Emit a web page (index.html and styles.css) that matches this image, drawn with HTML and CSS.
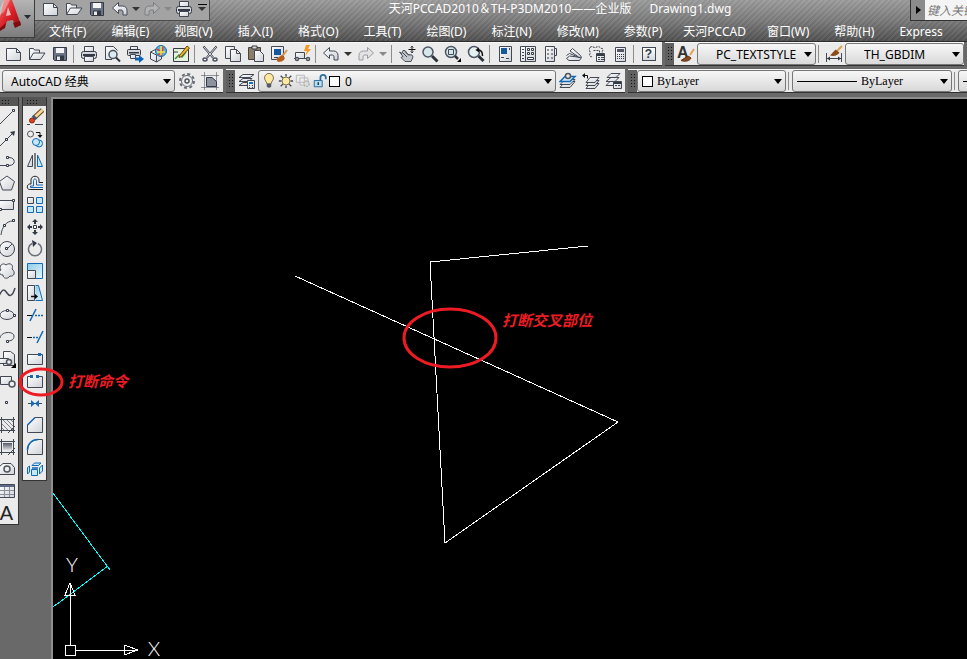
FILE: index.html
```
<!DOCTYPE html>
<html lang="zh-CN">
<head>
  <meta charset="UTF-8" />
  <meta name="viewport" content="width=device-width, initial-scale=1" />
  <title>天河PCCAD2010 - Drawing1.dwg</title>
  <link rel="stylesheet" href="styles.css">
</head>
<body>

  <!-- icon sprite -->
  <svg class="sprite" aria-hidden="true">
    <defs>
      <linearGradient id="paper" x1="0" y1="0" x2="1" y2="1"><stop offset="0" stop-color="#fff"/><stop offset="1" stop-color="#cfd2d8"/></linearGradient>
      <linearGradient id="sky" x1="0" y1="0" x2="1" y2="1"><stop offset="0" stop-color="#8ccbe8"/><stop offset="1" stop-color="#e6f6fc"/></linearGradient>
      <linearGradient id="dusk" x1="0" y1="0" x2="0" y2="1"><stop offset="0" stop-color="#555a66"/><stop offset="1" stop-color="#f2f2f2"/></linearGradient>
      <linearGradient id="red" x1="0" y1="0" x2="1" y2="1"><stop offset="0" stop-color="#f47070"/><stop offset=".5" stop-color="#d81f26"/><stop offset="1" stop-color="#8d0d10"/></linearGradient>
    </defs>
    <symbol id="i-new" viewBox="0 0 18 18"><path class="ol" d="M1.500 3.500h10l4 4v8h-14z"/><path class="ln" d="M11.500 3.500v4h4"/></symbol>
    <symbol id="i-open" viewBox="0 0 18 18"><path class="ol" d="M1.500 14.500v-11h4l1 1.500h5v3"/><path class="ol" d="M1.500 14.500l4-6.500h11.500l-4.500 6.500z"/></symbol>
    <symbol id="i-save" viewBox="0 0 18 18"><path fill="#6b7585" stroke="#333a46" d="M2.500 2.500h13v13h-12l-1-1z"/><path fill="#f4f4f4" d="M5 3h8v5H5z"/><path fill="#333a46" d="M5 10.500h8V15H5z"/><path fill="#e8e8e8" d="M6 11.500h3V15H6z"/></symbol>
    <symbol id="i-print" viewBox="0 0 18 18"><path class="ol" d="M4.500 7V1.500h9V7"/><rect x="1.500" y="6.500" width="15" height="7" rx="2" fill="#d4d6da" stroke="#333a46"/><path fill="#333a46" d="M3 9h12v2H3z"/><path class="ol" d="M4.500 11.500h9v5h-9z"/></symbol>
    <symbol id="i-preview" viewBox="0 0 18 18"><path class="ol" d="M9 14.500H2.500v-13h8l4 4"/><circle cx="10" cy="9.500" r="4" fill="#dcebf2" stroke="#4a505c" stroke-width="1.500"/><path d="M13 12.500l4 4" stroke="#2f333c" stroke-width="2"/></symbol>
    <symbol id="i-publish" viewBox="0 0 18 18"><path class="ol" d="M4.500 5V1.500h7V5"/><rect x="1.500" y="4.500" width="13" height="6" rx="1" fill="#d4d6da" stroke="#333a46"/><path fill="#333a46" d="M3 7h10v1.500H3z"/><path class="ol" d="M4.500 9.500h5v4h-5z"/><path fill="#0b63b8" d="M9 12.500h4V10l5 4-5 4v-2.500H9z"/></symbol>
    <symbol id="i-globe" viewBox="0 0 18 18"><path class="ol" d="M1.500 7l6-3 5 2v8l-5 3-6-3z"/><path class="ln" d="M1.500 7l6 3v7"/><circle cx="12" cy="6" r="5.500" fill="#4db7e8" stroke="#1c6aa3"/><path d="M7.500 4c4 1 6 5 5 7M9 9.500c3 0 5-3 5-8" fill="none" stroke="#e8402c" stroke-width="1.500"/><path d="M8 7h8M12 1v9" stroke="#f5e24a" stroke-width="1.500"/></symbol>
    <symbol id="i-sketch" viewBox="0 0 18 18"><path d="M1.500 3.500h15v13h-15z" fill="#e7f2dc" stroke="#333a46"/><path d="M3 14l4-4 3 2 4-5" fill="none" stroke="#3c8d4c" stroke-width="1.500"/><path d="M2 7h4" stroke="#333a46"/><path d="M7.500 10.500L15 1l2.500 2-8 8.500-2.500 1z" fill="#f0b429" stroke="#6b4a10"/></symbol>
    <symbol id="i-cut" viewBox="0 0 18 18"><path d="M2.500 1.500l9.500 11M15.500 1.500L6 12.500" stroke="#333a46" stroke-width="2"/><path d="M3 2l9 10.500M15 2L6 12.500" stroke="#d9dbdf"/><ellipse cx="4" cy="14.500" rx="2" ry="1.500" class="th"/><ellipse cx="14" cy="14.500" rx="2" ry="1.500" class="th"/></symbol>
    <symbol id="i-copy" viewBox="0 0 18 18"><path class="ol" d="M1.500 1.500h9v12h-9z"/><path class="ol" d="M6.500 4.500h6l4 4v8h-10z"/><path class="ln" d="M12.500 4.500v4h4"/></symbol>
    <symbol id="i-paste" viewBox="0 0 18 18"><path d="M1.500 2.500h12v12h-12z" fill="#8b7f6c" stroke="#4c4438"/><path d="M5 1h5v3H5z" fill="#d8d8d8" stroke="#333a46"/><path class="ol" d="M7.500 5.500h5l4 4v7h-9z"/></symbol>
    <symbol id="i-match" viewBox="0 0 18 18"><path class="ol" d="M1.500 1.500h12v13h-12z"/><path fill="#14579e" d="M4 4h7v6H4z"/><path class="ln" d="M4 12.500h4"/><path d="M17 5l-4.500 6" stroke="#d89a4a" stroke-width="2"/><path fill="#b55f1d" d="M6 14l6-4 3 3c-1 3-4 4-7 4z"/></symbol>
    <symbol id="i-block" viewBox="0 0 18 18"><path class="ol" d="M2.500 7.500h9v6h-9z"/><path class="ln" d="M1 13.500h3M9 13.500h7"/><path fill="#f49a22" d="M13 0l-2 6h3l-2 5 6-7h-3l2-4z"/><circle cx="4" cy="14" r="1.500" class="th"/><circle cx="15" cy="14" r="1.500" class="th"/></symbol>
    <symbol id="i-undo" viewBox="0 0 18 18"><path class="ol" d="M1.500 8L7.500 2.500v3.500h4c3 0 4.500 2 4.500 4.500v4.500h-4v-3c0-1.500-1-2-2-2H7.500v3.500z"/></symbol>
    <symbol id="i-redo" viewBox="0 0 18 18"><path fill="#e3e3e3" stroke="#9a9ca1" d="M16.500 8l-6-5.500v3.500h-4C3.500 6 2 8 2 10.500v4.500h4v-3c0-1.500 1-2 2-2h2.500v3.500z"/></symbol>
    <symbol id="i-redo-qat" viewBox="0 0 18 18"><path fill="#b2b2b2" stroke="#7c7e84" d="M16.500 8l-6-5.500v3.500h-4C3.500 6 2 8 2 10.500v4.500h4v-3c0-1.500 1-2 2-2h2.500v3.500z"/></symbol>
    <symbol id="i-pan" viewBox="0 0 18 18"><path fill="#c4c7cc" stroke="#4a505c" d="M1.500 7l2.500 1.500 1-3 2 0 3 4 4 .5 1 2-2 4.500H7l-4-4 2-1z"/><path class="ln" d="M5 8l4 4M7 6.500l4 4"/><path class="dk" d="M14 1v7M10.500 4.500h7"/><path class="ln" d="M12.500 2.500L14 1l1.500 1.500M12.500 6.500L14 8l1.500-1.500"/></symbol>
    <symbol id="i-zoom" viewBox="0 0 18 18"><circle cx="7" cy="7" r="5" fill="#d5e7e9" stroke="#4f5663" stroke-width="1.500"/><path d="M11 11l5.500 5.500" stroke="#2f333c" stroke-width="3"/></symbol>
    <symbol id="i-zoomwin" viewBox="0 0 18 18"><circle cx="7" cy="7" r="5.500" fill="#d5e7e9" stroke="#4f5663" stroke-width="1.500"/><path class="ln" d="M4.500 4.500h5v5h-5z"/><path d="M11 11l3 3" stroke="#2f333c" stroke-width="2.500"/><path fill="#000" d="M17 13v4h-4z"/></symbol>
    <symbol id="i-zoomprev" viewBox="0 0 18 18"><circle cx="7" cy="7" r="5.500" fill="#e4f0f1" stroke="#4f5663" stroke-width="1.500"/><path d="M11.500 11l5 5" stroke="#2f333c" stroke-width="3"/><path d="M15.500 11c0-4-1-6-4-6" fill="none" stroke="#111" stroke-width="1.500"/><path fill="#111" d="M8.500 5L12 2.500v5z"/></symbol>
    <symbol id="i-props" viewBox="0 0 18 18"><path class="ol" d="M3.500 1.500h12v15h-12z"/><path fill="#14579e" d="M5 3h6v6H5z"/><path class="ln" d="M5 12.500h3M10 13.500h3M13.500 3v2"/></symbol>
    <symbol id="i-center" viewBox="0 0 18 18"><path class="ol" d="M1.500 1.500h15v15h-15z"/><path class="ln" d="M6.500 2v14M3 4.500h2M3 7.500h2M3 10.500h2M3 13.500h2"/><path class="sm" d="M8.500 3.500h2v2h-2zM12.500 3.500h2v2h-2zM8.500 7.500h2v2h-2zM12.500 7.500h2v2h-2zM8.500 12.500h6v2h-6z"/></symbol>
    <symbol id="i-palette" viewBox="0 0 18 18"><path class="ol" d="M3.500 1.500h9v15h-9z"/><path class="ol" d="M12.500 3.500h2v7h-2z"/><path fill="#8a8f99" d="M5 4h2v2H5zM9 4h2v2H9zM5 8h2v2H5zM9 8h2v2H9zM5 12h2v2H5zM9 12h2v2H9z"/></symbol>
    <symbol id="i-sheets" viewBox="0 0 18 18"><path class="ol" d="M1.500 13.500l3-2.500 12 1.500-2 3H4zM1.500 10.500l3-2 10 4"/><path class="ol" d="M5 6l2.500-2.500 8 7c1.500 1.500 0 2.500-2 1.500z"/></symbol>
    <symbol id="i-markup" viewBox="0 0 18 18"><path d="M2 2.500c2-2 3 0 5 0s3-2 5 0 3 0 3 2-2 2 0 4M2 2.500c-2 3 1 4 0 6s0 4 3 3" fill="none" stroke="#333a46" stroke-dasharray="2 1"/><path class="ln" d="M5.500 5.500h6v3" stroke-dasharray="2 1"/><path class="ol" d="M8.500 8.500h8v8h-8z"/><path fill="#333a46" d="M9 9h7v2H9z"/><path class="ln" d="M10 12.500h2M13 12.500h3M10 14.500h2M13 14.500h3"/></symbol>
    <symbol id="i-calc" viewBox="0 0 18 18"><path class="ol" d="M4.500 2.500h10v14h-10z"/><path fill="#556" d="M6 4h7v3H6z"/><path d="M6 9.500h7M6 11.500h7M6 13.500h7" stroke="#333a46" stroke-dasharray="1 1"/></symbol>
    <symbol id="i-brush" viewBox="0 0 18 18"><path d="M17 4L13 10" stroke="#e0a24d" stroke-width="2"/><path fill="#8d4a1c" stroke="#5c3012" d="M4 15.500l7-4.500 3 2c-1 3-6 4-10 2.500z"/></symbol>
    <symbol id="i-dim" viewBox="0 0 18 18"><path class="ln" d="M1.500 8v9M16.500 8v9M2 13.500h14"/><path fill="#333a46" d="M2 13.500l3-2v4zM16 13.500l-3-2v4z"/><path d="M17 1l-5 5" stroke="#e0a24d" stroke-width="2"/><path fill="#8d4a1c" d="M5 10.500l5.500-6 4 3c-2 3-5 4-9.500 3z"/></symbol>
    <symbol id="i-gear" viewBox="0 0 18 18"><circle cx="9" cy="9" r="7" fill="none" stroke="#666b74" stroke-width="2" stroke-dasharray="3 2.500"/><circle cx="9" cy="9" r="5.500" fill="#eee" stroke="#666b74"/><circle cx="9" cy="9" r="2" class="th"/></symbol>
    <symbol id="i-space" viewBox="0 0 18 18"><path d="M.5 3.500h17M.5 15.500h17M3.500.5v17M15.500.5v17" stroke="#333a46" stroke-dasharray="1 1"/><path fill="#8d939e" stroke="#333a46" d="M5.500 14.500v-9H11l4.500 4v5z"/></symbol>
    <symbol id="i-layers" viewBox="0 0 18 18"><path class="ol" d="M5 2.500h11l-4 3H1zM5 6.500h9l-3 3H1zM5 10.500h5l-1 3H1z"/><path class="ol" d="M9.500 8.500h7v8h-7z"/><path fill="#1671c9" d="M11 10h4v2h-4z"/><path class="ln" d="M11 13.500h1M14 13.500h1M11 15.500h1M14 15.500h1"/></symbol>
    <symbol id="i-bulb" viewBox="0 0 18 18"><path fill="#ffe9a0" stroke="#6b6040" d="M6.500 12c0-3-2.500-3-2.500-6.500a5 5 0 0 1 10 0C14 9 11.500 9 11.500 12z"/><path fill="#555b66" d="M6.500 12.500h5v3l-2.500 1.500-2.500-1.500z"/></symbol>
    <symbol id="i-sun" viewBox="0 0 18 18"><path d="M9 1v3M9 14v3M1 9h3M14 9h3M3 3l2.500 2.500M12.500 12.500L15 15M15 3l-2.500 2.500M5.500 12.500L3 15" stroke="#414854" stroke-width="1.500"/><circle cx="9" cy="9" r="4.500" fill="#ffe9a0" stroke="#6b6040"/></symbol>
    <symbol id="i-vp" viewBox="0 0 18 18"><path fill="#eee" stroke="#b2b4b8" d="M1.500 2.500h9v8h-9zM5.500 5.500h9v8h-9z"/><circle cx="13" cy="12" r="3" fill="#ddd" stroke="#aaa" stroke-width="1.500" stroke-dasharray="2 1"/></symbol>
    <symbol id="i-lock" viewBox="0 0 18 18"><path d="M9.500 8V5c0-4 6-4 6 0v2" fill="none" stroke="#2a6f9e" stroke-width="2"/><path fill="#b7e0f3" stroke="#1c5f90" d="M2.500 8.500h9v7h-9z"/><path d="M7 10.500v3" stroke="#123" stroke-width="1.500"/></symbol>
    <symbol id="i-lay1" viewBox="0 0 18 18"><path class="ol" d="M6 9.500h10l-5 6H1z"/><path class="ol" d="M6 7.500h10l-5 5H1z"/><path fill="#cfe8f7" stroke="#1269b8" stroke-width="1.500" d="M6 4.500h10l-5 5H1z"/><circle cx="9" cy="4" r="2.500" class="th"/></symbol>
    <symbol id="i-lay2" viewBox="0 0 18 18"><path class="ol" d="M8 11.500h9l-4 5H4z"/><path class="ol" d="M8 8.500h9l-4 5H4z"/><path class="ol" d="M8 5.500h9l-4 5H4z"/><path class="dk" d="M2 3.500h3.500v3"/><path fill="#111" d="M0 3.500L3 1v5z"/></symbol>
    <symbol id="i-lay3" viewBox="0 0 18 18"><path class="ol" d="M5 9.500h7l-2 4H1z"/><path class="ol" d="M6 5.500h8l-4 4H1z"/><path class="ol" d="M6 1.500h9l-4 4H2z"/><path class="ol" d="M8.500 9.500h8v7h-8z"/><path fill="#333a46" d="M9 10h7v2H9z"/><path class="ln" d="M10 13.500h2M13 13.500h2"/></symbol>

    <symbol id="d-line" viewBox="0 0 18 18"><path class="ln" d="M1 17L14 4"/><path class="sm" d="M14.500 1.500h2v2h-2z"/></symbol>
    <symbol id="d-xline" viewBox="0 0 18 18"><path class="ln" d="M2 16L15 3"/><path fill="#333a46" d="M17 1l-5 1 4 4z"/><path class="sm" d="M7.500 8.500h2v2h-2z"/></symbol>
    <symbol id="d-pline" viewBox="0 0 18 18"><path class="ln" d="M2 13.500h9c7 0 7-8 0-8H10"/><path class="sm" d="M8.500 4.500h2v2h-2zM8.500 12.500h2v2h-2z"/></symbol>
    <symbol id="d-poly" viewBox="0 0 18 18"><path class="ol" d="M9 2l7.500 5.500-3 8.500h-9l-3-8.500z"/></symbol>
    <symbol id="d-rect" viewBox="0 0 18 18"><path class="ol" d="M1.500 4.500h14v9h-14z"/><path class="sm" d="M14.500 3.500h2v2h-2zM1.500 12.500h2v2h-2z"/></symbol>
    <symbol id="d-arc" viewBox="0 0 18 18"><path class="ln" d="M3 17C4 9 8 3 15 3"/><path class="sm" d="M14.500 1.500h2v2h-2zM5.500 6.500h2v2h-2z"/></symbol>
    <symbol id="d-circle" viewBox="0 0 18 18"><circle cx="9" cy="9" r="7.500" class="ol"/><path class="ln" d="M9 9l5-5"/><path class="sm" d="M7.500 7.500h2v2h-2z"/></symbol>
    <symbol id="d-cloud" viewBox="0 0 18 18"><path class="ol" d="M3 8C0 4 5 0 8 3c4-3 8 0 6 4 4 3 2 8-2 7-3 4-7 2-7-1-4 0-5-4-2-5z"/></symbol>
    <symbol id="d-spline" viewBox="0 0 18 18"><path class="ln" d="M1 12c4-9 6-6 8-3s5 5 8-5" stroke-width="1.500"/></symbol>
    <symbol id="d-ellipse" viewBox="0 0 18 18"><ellipse cx="9" cy="9" rx="7" ry="4.500" class="ol"/><path class="sm" d="M8.500 3.500h2v2h-2zM15.500 8.500h2v2h-2z"/></symbol>
    <symbol id="d-earc" viewBox="0 0 18 18"><path class="ln" d="M2 10C3 3 16 3 16 8c0 4-3 5-7 5"/><path class="sm" d="M8.500 12.500h2v2h-2z"/></symbol>
    <symbol id="d-insert" viewBox="0 0 18 18"><path class="ol" d="M5.500 1.500h7l4 3v11h-11z"/><path class="ol" d="M1.500 8.500h9v5h-9z"/><circle cx="11" cy="12" r="2.500" class="th"/><path fill="#000" d="M18 13v5h-5z"/></symbol>
    <symbol id="d-mkblock" viewBox="0 0 18 18"><path class="ol" d="M2.500 4.500h11v8h-11z"/><circle cx="14" cy="12" r="3" class="th"/></symbol>
    <symbol id="d-point" viewBox="0 0 18 18"><path class="sm" d="M7.500 7.500h2v2h-2z"/></symbol>
    <symbol id="d-hatch" viewBox="0 0 18 18"><path d="M5 4l10 10M9 4l6 6M4 8l7 7M13 4l2 2M4 12l2 2" stroke="#7d828c"/><path class="ln" d="M3.500 1v16M15.500 1v16M1 3.500h16M1 14.500h16M10 17l7-7"/></symbol>
    <symbol id="d-grad" viewBox="0 0 18 18"><path class="ln" d="M3.500 1v16M15.500 1v16M1 3.500h16M1 14.500h16M10 17l7-7"/><path fill="url(#dusk)" d="M5 5h9v8H5z"/></symbol>
    <symbol id="d-region" viewBox="0 0 18 18"><path class="ol" d="M1.500 14.500v-8L5 3.500h8l3.500 4v7z"/><circle cx="9" cy="9" r="3" class="th"/></symbol>
    <symbol id="d-table" viewBox="0 0 18 18"><path class="ol" d="M1.500 2.500h15v13h-15z"/><path fill="#5b6b86" d="M2 3h14v2H2z"/><path d="M2 8.500h14M2 12.500h14M6.500 5v10M11.500 5v10" stroke="#8a8f99"/></symbol>

    <symbol id="m-erase" viewBox="0 0 18 18"><path d="M16.500 2L8 10" stroke="#6b4a10" stroke-width="5"/><path d="M16.500 2L8 10" stroke="#f3d79a" stroke-width="3"/><path d="M9.500 8.500l-2 2" stroke="#41567a" stroke-width="5"/><circle cx="6" cy="12.500" r="2.500" fill="#d8421c" stroke="#8a260c"/><path class="ln" d="M1 16.500h3M9 16.500h8"/></symbol>
    <symbol id="m-copy" viewBox="0 0 18 18"><circle cx="4.500" cy="4" r="3" fill="#eee" stroke="#50565f"/><path class="dk" d="M10 2.500h4v3"/><path fill="#111" d="M11.500 5h5L14 8z"/><circle cx="13" cy="13.500" r="3.500" class="bb"/><circle cx="10" cy="12" r="3.500" class="bb"/></symbol>
    <symbol id="m-mirror" viewBox="0 0 18 18"><path class="ol" d="M6.500 3v11.500h-5z"/><path class="bb" d="M11.500 3v11.500h5z"/><path d="M9 1v16" stroke="#111"/></symbol>
    <symbol id="m-offset" viewBox="0 0 18 18"><path d="M17 15.500H3.500c-3 0-3-5 0-5.500H5V6c0-5 8-5 8 0v2.500h4" fill="none" stroke="#222"/><path d="M17 13.500H4.500v-1.500H7.500V6.500c0-2 3-2 3 0v4.500H17" fill="none" stroke="#1269b8"/></symbol>
    <symbol id="m-array" viewBox="0 0 18 18"><path class="ol" d="M1.500 1.500h6v6h-6z"/><path class="bb" d="M10.500 1.500h6v6h-6zM1.500 10.500h6v6h-6zM10.500 10.500h6v6h-6z"/></symbol>
    <symbol id="m-move" viewBox="0 0 18 18"><path d="M9 2v4M9 12v4M2 9h4M12 9h4" stroke="#333a46" stroke-width="2"/><path fill="#333a46" d="M9 1l3 3H6zM9 17l3-3H6zM1 9l3-3v6zM17 9l-3-3v6z"/><path class="sm" d="M7.500 7.500h3v3h-3z"/></symbol>
    <symbol id="m-rotate" viewBox="0 0 18 18"><path d="M12 3.500a6.500 6.500 0 1 1-6 0" fill="none" stroke="#6b7079" stroke-width="1.500"/><path fill="#333a46" d="M6 0l5 3-4 4z"/></symbol>
    <symbol id="m-scale" viewBox="0 0 18 18"><path fill="url(#sky)" stroke="#1269b8" d="M1.500 1.500h15v15h-15z"/><path class="ol" d="M1.500 8.500h8v8h-8z"/></symbol>
    <symbol id="m-stretch" viewBox="0 0 18 18"><path class="ol" d="M1.500 1.500h7v15h-7z"/><path fill="url(#sky)" stroke="#1269b8" d="M9.500 1.500h3l4 15h-7"/><path class="dk" d="M5 12.500h5" stroke-width="1.500"/><path fill="#000" d="M9 10l3 2.500L9 15z"/></symbol>
    <symbol id="m-trim" viewBox="0 0 18 18"><path class="dk" d="M1 9.500h5"/><path class="bs" d="M4 15l6-12"/><path class="bs" d="M9 9.500h8" stroke-dasharray="2 1"/></symbol>
    <symbol id="m-extend" viewBox="0 0 18 18"><path class="dk" d="M1 9.500h5"/><path class="bs" d="M7 9.500h5" stroke-dasharray="2 1"/><path class="bs" d="M11 15l6-12"/></symbol>
    <symbol id="m-break1" viewBox="0 0 18 18"><path class="ol" d="M1.500 4.500h15v10h-15z"/><path fill="#1269b8" d="M12 3h3v3h-3z"/></symbol>
    <symbol id="m-break" viewBox="0 0 18 18"><path fill="url(#paper)" d="M2 4h14v11H2z"/><path class="ln" d="M5 4.500H1.500v11h15v-11H13"/><path fill="#1269b8" d="M4 3h3v3H4zM10 3h3v3h-3z"/></symbol>
    <symbol id="m-join" viewBox="0 0 18 18"><path class="ln" d="M2 9.500h14"/><path fill="#1269b8" d="M5 6l4 3.500L5 13zM13 6L9 9.500l4 3.500z"/></symbol>
    <symbol id="m-chamfer" viewBox="0 0 18 18"><path class="ol" d="M1.500 9v7.500h15v-15H9z"/><path class="bs" d="M1.500 9L9 1.500"/></symbol>
    <symbol id="m-fillet" viewBox="0 0 18 18"><path class="ol" d="M1.500 12v4.500h15v-15H12C6 1.500 1.500 6 1.500 12z"/><path class="bs" d="M1.500 12C1.500 6 6 1.500 12 1.500"/></symbol>
    <symbol id="m-explode" viewBox="0 0 18 18"><path class="bb" d="M5.500 9.500h6v6h-6zM6 5.500L8.500 3H15l-2.500 2.500zM13.500 8l3-3v6l-3 3zM1.500 7.500l2-1.500v6l-2 2z"/><path class="bs" d="M6 8h6"/></symbol>
  </svg>

  <header class="app-header">
    <button class="app-button" aria-label="应用程序菜单">
      <svg width="34" height="37" viewBox="0 0 34 37"><path fill="url(#red)" d="M4 0h8l9 25-6 2-2-7-6 1-2 6-6 4v-9z"/><path fill="#fff" fill-opacity=".35" d="M4 0h6L4 12l-4 3V8z"/><path fill="#e9b8b8" d="M8 7l3 8-5 1z"/><path fill="#7d0c10" d="M21 25l-6 3-2-5 7-2zM0 31l5-3 1-5-6 5z"/><path fill="#222a33" d="M24 15h7l-3.500 4z"/></svg>
    </button>
    <div class="header-main">
      <div class="title-row">
        <div class="quick-access">
          <button class="tool" aria-label="新建"><svg><use href="#i-new"/></svg></button>
          <button class="tool" aria-label="打开"><svg><use href="#i-open"/></svg></button>
          <button class="tool" aria-label="保存"><svg><use href="#i-save"/></svg></button>
          <button class="tool" aria-label="放弃"><svg><use href="#i-undo"/></svg></button>
          <button class="caret" aria-label="放弃列表"></button>
          <button class="tool" aria-label="重做"><svg><use href="#i-redo-qat"/></svg></button>
          <button class="caret off" aria-label="重做列表"></button>
          <button class="tool" aria-label="打印"><svg><use href="#i-print"/></svg></button>
          <button class="caret more" aria-label="自定义"></button>
        </div>
        <h1 class="title"><span>天河PCCAD2010＆TH-P3DM2010——企业版</span><span>Drawing1.dwg</span></h1>
        <div class="search">
          <button class="search-arrow" aria-label="展开"></button>
          <input type="text" class="search-box" placeholder="键入关键字或短语" aria-label="搜索">
        </div>
      </div>
      <nav class="menu-bar">
        <button>文件(F)</button>
        <button>编辑(E)</button>
        <button>视图(V)</button>
        <button>插入(I)</button>
        <button>格式(O)</button>
        <button>工具(T)</button>
        <button>绘图(D)</button>
        <button>标注(N)</button>
        <button>修改(M)</button>
        <button>参数(P)</button>
        <button class="tight">天河PCCAD</button>
        <button class="tight">窗口(W)</button>
        <button>帮助(H)</button>
        <button>Express</button>
      </nav>
    </div>
  </header>

  <div class="toolbar-row">
    <div class="toolbar first">
      <button class="tool" aria-label="新建"><svg><use href="#i-new"/></svg></button>
      <button class="tool" aria-label="打开"><svg><use href="#i-open"/></svg></button>
      <button class="tool" aria-label="保存"><svg><use href="#i-save"/></svg></button>
      <span class="sep"></span>
      <button class="tool" aria-label="打印"><svg><use href="#i-print"/></svg></button>
      <button class="tool" aria-label="打印预览"><svg><use href="#i-preview"/></svg></button>
      <button class="tool" aria-label="发布"><svg><use href="#i-publish"/></svg></button>
      <button class="tool" aria-label="三维DWF"><svg><use href="#i-globe"/></svg></button>
      <button class="tool" aria-label="草图"><svg><use href="#i-sketch"/></svg></button>
      <span class="sep"></span>
      <button class="tool" aria-label="剪切"><svg><use href="#i-cut"/></svg></button>
      <button class="tool" aria-label="复制"><svg><use href="#i-copy"/></svg></button>
      <button class="tool" aria-label="粘贴"><svg><use href="#i-paste"/></svg></button>
      <button class="tool" aria-label="特性匹配"><svg><use href="#i-match"/></svg></button>
      <button class="tool" aria-label="块编辑器"><svg><use href="#i-block"/></svg></button>
      <span class="sep"></span>
      <button class="tool" aria-label="放弃"><svg><use href="#i-undo"/></svg></button>
      <button class="caret" aria-label="放弃列表"></button>
      <button class="tool" aria-label="重做"><svg><use href="#i-redo"/></svg></button>
      <button class="caret off" aria-label="重做列表"></button>
      <span class="sep"></span>
      <button class="tool" aria-label="平移"><svg><use href="#i-pan"/></svg></button>
      <button class="tool" aria-label="缩放"><svg><use href="#i-zoom"/></svg></button>
      <button class="tool" aria-label="窗口缩放"><svg><use href="#i-zoomwin"/></svg></button>
      <button class="tool" aria-label="缩放上一个"><svg><use href="#i-zoomprev"/></svg></button>
      <span class="sep"></span>
      <button class="tool" aria-label="特性"><svg><use href="#i-props"/></svg></button>
      <button class="tool" aria-label="设计中心"><svg><use href="#i-center"/></svg></button>
      <button class="tool" aria-label="工具选项板"><svg><use href="#i-palette"/></svg></button>
      <button class="tool" aria-label="图纸集"><svg><use href="#i-sheets"/></svg></button>
      <button class="tool" aria-label="标记集"><svg><use href="#i-markup"/></svg></button>
      <button class="tool" aria-label="快速计算器"><svg><use href="#i-calc"/></svg></button>
      <span class="sep"></span>
      <button class="tool" aria-label="帮助"><span class="help-mark">?</span></button>
    </div>
    <div class="toolbar grip">
      <button class="tool" aria-label="文字样式"><svg><text x="0" y="13" class="glyph-a">A</text><use href="#i-brush"/></svg></button>
      <select class="combo style-combo" aria-label="文字样式"><option>PC_TEXTSTYLE</option></select>
      <span class="sep"></span>
      <button class="tool" aria-label="标注样式"><svg><use href="#i-dim"/></svg></button>
      <select class="combo style-combo" aria-label="标注样式"><option>TH_GBDIM</option></select>
    </div>
  </div>

  <div class="toolbar-row">
    <div class="toolbar first">
      <select class="combo workspace-combo" aria-label="工作空间"><option>AutoCAD 经典</option></select>
      <button class="tool" aria-label="工作空间设置"><svg><use href="#i-gear"/></svg></button>
      <button class="tool" aria-label="我的工作空间"><svg><use href="#i-space"/></svg></button>
    </div>
    <div class="toolbar grip">
      <button class="tool" aria-label="图层特性"><svg><use href="#i-layers"/></svg></button>
      <div class="combo combo-group layer-combo">
        <svg><use href="#i-bulb"/></svg>
        <svg><use href="#i-sun"/></svg>
        <svg><use href="#i-vp"/></svg>
        <svg><use href="#i-lock"/></svg>
        <span class="swatch"></span>
        <select aria-label="图层"><option>0</option></select>
      </div>
      <button class="tool" aria-label="置为当前"><svg><use href="#i-lay1"/></svg></button>
      <button class="tool" aria-label="上一个图层"><svg><use href="#i-lay2"/></svg></button>
      <button class="tool" aria-label="图层状态"><svg><use href="#i-lay3"/></svg></button>
    </div>
    <div class="toolbar grip">
      <div class="combo combo-group color-combo">
        <span class="swatch"></span>
        <select aria-label="颜色"><option>ByLayer</option></select>
      </div>
      <span class="sep"></span>
      <div class="combo combo-group line-combo">
        <span class="line-sample"></span>
        <select aria-label="线型"><option>ByLayer</option></select>
      </div>
      <span class="sep"></span>
      <div class="combo combo-group line-combo">
        <span class="line-sample"></span>
        <select aria-label="线宽"><option>ByLayer</option></select>
      </div>
    </div>
  </div>

  <main class="workspace">
    <div class="palette draw">
      <button aria-label="直线"><svg><use href="#d-line"/></svg></button>
      <button aria-label="构造线"><svg><use href="#d-xline"/></svg></button>
      <button aria-label="多段线"><svg><use href="#d-pline"/></svg></button>
      <button aria-label="正多边形"><svg><use href="#d-poly"/></svg></button>
      <button aria-label="矩形"><svg><use href="#d-rect"/></svg></button>
      <button aria-label="圆弧"><svg><use href="#d-arc"/></svg></button>
      <button aria-label="圆"><svg><use href="#d-circle"/></svg></button>
      <button aria-label="修订云线"><svg><use href="#d-cloud"/></svg></button>
      <button aria-label="样条曲线"><svg><use href="#d-spline"/></svg></button>
      <button aria-label="椭圆"><svg><use href="#d-ellipse"/></svg></button>
      <button aria-label="椭圆弧"><svg><use href="#d-earc"/></svg></button>
      <button aria-label="插入块"><svg><use href="#d-insert"/></svg></button>
      <button aria-label="创建块"><svg><use href="#d-mkblock"/></svg></button>
      <button aria-label="点"><svg><use href="#d-point"/></svg></button>
      <button aria-label="图案填充"><svg><use href="#d-hatch"/></svg></button>
      <button aria-label="渐变色"><svg><use href="#d-grad"/></svg></button>
      <button aria-label="面域"><svg><use href="#d-region"/></svg></button>
      <button aria-label="表格"><svg><use href="#d-table"/></svg></button>
      <button class="mtext" aria-label="多行文字">A</button>
    </div>
    <div class="palette modify">
      <button aria-label="删除"><svg><use href="#m-erase"/></svg></button>
      <button aria-label="复制"><svg><use href="#m-copy"/></svg></button>
      <button aria-label="镜像"><svg><use href="#m-mirror"/></svg></button>
      <button aria-label="偏移"><svg><use href="#m-offset"/></svg></button>
      <button aria-label="阵列"><svg><use href="#m-array"/></svg></button>
      <button aria-label="移动"><svg><use href="#m-move"/></svg></button>
      <button aria-label="旋转"><svg><use href="#m-rotate"/></svg></button>
      <button aria-label="缩放"><svg><use href="#m-scale"/></svg></button>
      <button aria-label="拉伸"><svg><use href="#m-stretch"/></svg></button>
      <button aria-label="修剪"><svg><use href="#m-trim"/></svg></button>
      <button aria-label="延伸"><svg><use href="#m-extend"/></svg></button>
      <button aria-label="打断于点"><svg><use href="#m-break1"/></svg></button>
      <button aria-label="打断"><svg><use href="#m-break"/></svg></button>
      <button aria-label="合并"><svg><use href="#m-join"/></svg></button>
      <button aria-label="倒角"><svg><use href="#m-chamfer"/></svg></button>
      <button aria-label="圆角"><svg><use href="#m-fillet"/></svg></button>
      <button aria-label="分解"><svg><use href="#m-explode"/></svg></button>
    </div>
    <div class="canvas">
      <svg class="drawing">
        <path class="entity" d="M242 177L565 323L392 444L377 163L535 147"/>
        <path class="entity cyan" d="M0 394L57 471M55 467L0 508"/>
        <!-- UCS icon -->
        <path class="ucs" d="M12 546h10v10H12zM17 546V496M23 551h48"/>
        <path class="ucs" d="M17 484l-5 12h10zM17 484v12M85 551l-14-5v10zM71 551h14"/>
        <text class="axis" x="19" y="473" text-anchor="middle">Y</text>
        <text class="axis" x="101" y="557" text-anchor="middle">X</text>
        <!-- notes -->
        <ellipse class="mark" cx="397" cy="239" rx="46" ry="29"/>
        <text class="note" x="449" y="227">打断交叉部位</text>
        <ellipse class="mark" cx="-12" cy="283" rx="21" ry="13"/>
        <text class="note" x="15" y="288">打断命令</text>
      </svg>
    </div>
  </main>

</body>
</html>
```
FILE: styles.css
```
*,
*::before {
  box-sizing: border-box;
}

body {
  margin: 0;
  min-height: 100vh;
  display: flex;
  flex-direction: column;
  background: #696969;
  font-family: "Noto Sans", "Noto Sans CJK SC", sans-serif;
  font-size: 12px;
  overflow: hidden;
}

button,
select,
input {
  font: inherit;
  margin: 0;
  padding: 0;
  border: none;
  background: none;
}

button {
  display: flex;
  align-items: center;
  justify-content: center;
  flex: none;
}

.sprite {
  position: absolute;
  width: 0;
  height: 0;
}

/* icon strokes */
.ol {
  fill: url(#paper);
  stroke: #414854;
}

.ln {
  fill: none;
  stroke: #414854;
}

.dk {
  fill: none;
  stroke: #111;
}

.th {
  fill: #eee;
  stroke: #50565f;
  stroke-width: 1.5;
}

.sm {
  fill: #fff;
  stroke: #333a46;
}

.bb {
  fill: #c5e7f6;
  stroke: #1269b8;
}

.bs {
  fill: none;
  stroke: #1269b8;
  stroke-width: 1.5;
}

.glyph-a {
  font: bold 16px "Liberation Sans", sans-serif;
  fill: #333;
}

.help-mark {
  width: 14px;
  height: 14px;
  border: 1px solid #414854;
  background: linear-gradient(#fff, #d4d8df);
  font: bold 12px/12px "Liberation Sans", sans-serif;
  color: #333a46;
}

/* header */
.app-header {
  display: flex;
  height: 42px;
  border-bottom: 1px solid #2b2b2b;
  background:
    repeating-linear-gradient(135deg, rgba(255, 255, 255, 0.05) 0 2px, rgba(0, 0, 0, 0.04) 2px 4px),
    linear-gradient(#9c9c9c, #7b7b7b 50%, #505050);
}

.app-button {
  width: 35px;
  height: 38px;
  background: linear-gradient(#b5b5b5, #7d7d7d);
  border-right: 1px solid #3c3c3c;
  border-bottom: 1px solid #3c3c3c;
  overflow: hidden;
}

.header-main {
  flex: 1;
  min-width: 0;
}

.title-row {
  display: flex;
  height: 21px;
}

.quick-access {
  display: flex;
  align-items: flex-start;
  flex: none;
  width: 175px;
  padding-left: 4px;
  background: #a3a3a3;
  border-right: 1px solid #4c4c4c;
  border-bottom: 1px solid #4c4c4c;
}

.quick-access .tool,
.quick-access .caret {
  height: 18px;
}

.quick-access .caret {
  width: 9px;
}

.quick-access .more {
  width: 14px;
  background: linear-gradient(#000, #000) center 4px / 9px 1px no-repeat;
}

.title {
  flex: 1;
  display: flex;
  justify-content: center;
  gap: 18px;
  margin: 0;
  font-size: 12px;
  font-weight: normal;
  line-height: 18px;
  color: #fff;
  white-space: nowrap;
}

.search {
  display: flex;
  flex: none;
  width: 57px;
  height: 21px;
  border-left: 1px solid #333;
  border-bottom: 1px solid #333;
  overflow: hidden;
}

.search-arrow {
  width: 14px;
  background: #8b8b8b;
}

.search-arrow::before {
  content: "";
  border: 4px solid transparent;
  border-left: 5px solid #000;
  border-right: none;
}

.search-box {
  flex: none;
  width: 180px;
  padding-left: 2px;
  background: #f4f4f4;
}

.search-box::placeholder {
  color: #777;
  font-style: italic;
}

.menu-bar {
  display: flex;
  gap: 25px;
  height: 20px;
  padding-left: 14px;
  white-space: nowrap;
}

.menu-bar button {
  color: #fff;
}

.menu-bar .tight {
  margin-left: -4px;
}

/* toolbars */
.toolbar-row {
  display: flex;
  gap: 3px;
  height: 27px;
  padding-bottom: 3px;
  overflow: hidden;
}

.toolbar {
  display: flex;
  align-items: center;
  flex: none;
  height: 24px;
  background: #ebebeb;
  border-bottom: 1px solid #333;
  border-top: 1px solid #f8f8f8;
}

.toolbar.first {
  padding: 0 2px;
}

.toolbar.grip::before {
  content: "";
  align-self: stretch;
  width: 9px;
  background:
    radial-gradient(circle, #111 1px, transparent 1px) 0 0 / 3px 3px,
    #606060;
  border: 3px solid #606060;
  border-right-width: 2px;
  border-left-width: 2px;
}

.tool {
  width: 23px;
  height: 22px;
}

.tool svg,
.palette svg {
  width: 18px;
  height: 18px;
}

.caret {
  width: 12px;
  height: 22px;
}

.caret::before {
  content: "";
  border: 4px solid transparent;
  border-top: 4px solid #333;
  border-bottom: none;
}

.caret.off::before {
  border-top-color: #888;
}

.sep {
  flex: none;
  width: 2px;
  height: 18px;
  margin: 0 2px;
  border-left: 1px solid #8c8c8c;
}

.combo {
  flex: none;
  height: 22px;
  border: 1px solid #777;
  border-radius: 3px;
  background: linear-gradient(#f7f7f7, #d9d9d9);
  color: #000;
}

select {
  appearance: none;
}

select.combo,
.combo select {
  background-repeat: no-repeat;
  background-position: right 3px center;
  background-size: 8px 5px;
  background-image: url("data:image/svg+xml,%3Csvg xmlns='http://www.w3.org/2000/svg' viewBox='0 0 8 5'%3E%3Cpath d='M0 0h8L4 5z'/%3E%3C/svg%3E");
}

select.combo {
  background-image:
    url("data:image/svg+xml,%3Csvg xmlns='http://www.w3.org/2000/svg' viewBox='0 0 8 5'%3E%3Cpath d='M0 0h8L4 5z'/%3E%3C/svg%3E"),
    linear-gradient(#f7f7f7, #d9d9d9);
  background-size: 8px 5px, 100% 100%;
  background-position: right 3px center, 0 0;
}

.style-combo {
  width: 119px;
  padding: 0 18px;
}

.workspace-combo {
  width: 173px;
  padding-left: 8px;
}

.combo-group {
  display: flex;
  align-items: center;
}

.combo-group svg {
  flex: none;
  width: 16px;
  height: 16px;
}

.combo-group select {
  flex: 1;
  min-width: 0;
  height: 20px;
  padding-left: 4px;
}

.layer-combo {
  width: 298px;
  padding-left: 2px;
  gap: 1px;
}

.color-combo {
  width: 149px;
  padding-left: 4px;
}

.line-combo {
  width: 160px;
  padding-left: 4px;
}

.color-combo select,
.line-combo select {
  font-family: "Liberation Serif", serif;
}

.swatch {
  flex: none;
  width: 11px;
  height: 11px;
  background: #fff;
  border: 1px solid #000;
}

.line-sample {
  flex: none;
  width: 60px;
  height: 1px;
  background: #000;
}

/* workspace */
.workspace {
  flex: 1;
  display: flex;
  align-items: flex-start;
  padding-top: 1px;
}

.palette {
  flex: none;
  width: 25px;
  background: #ebebeb;
  border: 1px solid #333;
  border-top: none;
}

.palette::before {
  content: "";
  display: block;
  height: 9px;
  background:
    radial-gradient(circle, #111 1px, transparent 1px) 0 0 / 3px 3px,
    #555;
  border: 2px solid #555;
  border-left-width: 3px;
  border-right-width: 7px;
}

.palette button {
  width: 23px;
  height: 22px;
}

.draw {
  margin-left: -6px;
}

.palette .mtext {
  font: 20px "Liberation Sans", sans-serif;
  color: #222;
}

.modify {
  margin: 0 4px 0 3px;
}

.canvas {
  position: relative;
  flex: 1;
  align-self: stretch;
  background: #000;
  border-left: 2px solid #8f8f8f;
  border-top: 2px solid #8f8f8f;
}

.drawing {
  position: absolute;
  top: 0;
  left: 0;
  width: 100%;
  height: 100%;
  overflow: visible;
  pointer-events: none;
}

.entity {
  fill: none;
  stroke: #fff;
  shape-rendering: crispEdges;
}

.cyan {
  stroke: #0ff;
}

.ucs {
  fill: none;
  stroke: #fff;
  shape-rendering: crispEdges;
}

.axis {
  font: 300 20px Lato, sans-serif;
  fill: #fff;
}

.mark {
  fill: none;
  stroke: #ed1c24;
  stroke-width: 3;
}

.note {
  font: italic bold 15px "Noto Sans CJK SC", sans-serif;
  fill: #ed1c24;
}
```
